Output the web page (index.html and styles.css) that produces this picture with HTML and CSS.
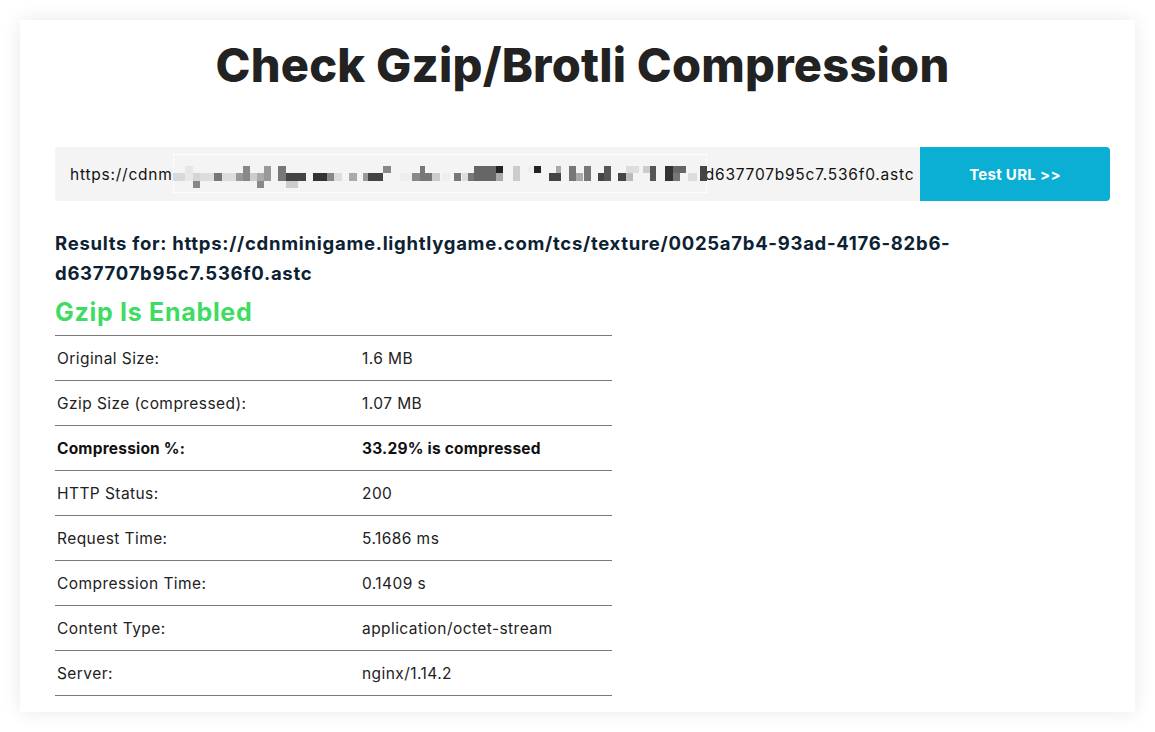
FILE: index.html
```html
<!DOCTYPE html>
<html lang="en">
<head>
<meta charset="utf-8">
<title>Check Gzip/Brotli Compression</title>
<link rel="stylesheet" href="styles.css">
</head>
<body>
<div class="card">
  <h1 class="title">Check Gzip/Brotli Compression</h1>
  <form class="test-form">
    <div class="url-field">
      <span class="url-text">https://cdnminigame.lightlygame.com/tcs/texture/0025a7b4-93ad-4176-82b6-d637707b95c7.536f0.astc</span>
      <svg class="redact" width="534" height="39" viewBox="0 0 534 39" aria-hidden="true">
        <rect x="0" y="0" width="534" height="39" fill="#f4f4f4" stroke="#ffffff" stroke-width="1.5"/>
        <g>
          <rect x="0" y="19" width="12" height="8" fill="#d9d9d9"/>
          <rect x="12" y="19" width="8" height="8" fill="#e8e8e8"/>
          <rect x="12" y="12" width="8" height="7" fill="#e6e6e6"/>
          <rect x="20" y="27" width="7" height="7" fill="#888"/>
          <rect x="20" y="19" width="7" height="8" fill="#d5d5d5"/>
          <rect x="27" y="19" width="14" height="8" fill="#ddd"/>
          <rect x="41" y="19" width="8" height="8" fill="#777"/>
          <rect x="49" y="19" width="14" height="8" fill="#ddd"/>
          <rect x="63" y="19" width="7" height="8" fill="#999"/>
          <rect x="70" y="12" width="7" height="15" fill="#888"/>
          <rect x="77" y="19" width="7" height="8" fill="#ccc"/>
          <rect x="84" y="19" width="7" height="8" fill="#aaa"/>
          <rect x="84" y="27" width="7" height="7" fill="#888"/>
          <rect x="91" y="12" width="7" height="15" fill="#999"/>
          <rect x="105" y="12" width="8" height="15" fill="#777"/>
          <rect x="113" y="19" width="20" height="8" fill="#444"/>
          <rect x="113" y="27" width="12" height="7" fill="#ccc"/>
          <rect x="140" y="19" width="14" height="8" fill="#333"/>
          <rect x="154" y="19" width="7" height="8" fill="#888"/>
          <rect x="161" y="19" width="8" height="8" fill="#ddd"/>
          <rect x="176" y="19" width="8" height="8" fill="#aaa"/>
          <rect x="190" y="19" width="5" height="8" fill="#999"/>
          <rect x="195" y="19" width="15" height="8" fill="#444"/>
          <rect x="210" y="12" width="8" height="7" fill="#888"/>
          <rect x="227" y="19" width="12" height="8" fill="#eee"/>
          <rect x="239" y="19" width="8" height="8" fill="#888"/>
          <rect x="247" y="12" width="5" height="7" fill="#777"/>
          <rect x="247" y="19" width="12" height="8" fill="#777"/>
          <rect x="259" y="19" width="8" height="8" fill="#ccc"/>
          <rect x="269" y="19" width="8" height="8" fill="#eee"/>
          <rect x="281" y="19" width="7" height="8" fill="#777"/>
          <rect x="289" y="19" width="6" height="8" fill="#ddd"/>
          <rect x="295" y="19" width="8" height="8" fill="#777"/>
          <rect x="301" y="12" width="22" height="15" fill="#666"/>
          <rect x="323" y="12" width="7" height="7" fill="#222"/>
          <rect x="323" y="19" width="7" height="8" fill="#aaa"/>
          <rect x="340" y="12" width="7" height="15" fill="#ccc"/>
          <rect x="355" y="12" width="5" height="7" fill="#eee"/>
          <rect x="361" y="12" width="7" height="7" fill="#222"/>
          <rect x="376" y="19" width="12" height="8" fill="#444"/>
          <rect x="383" y="12" width="5" height="7" fill="#aaa"/>
          <rect x="396" y="12" width="7" height="15" fill="#777"/>
          <rect x="403" y="19" width="7" height="8" fill="#aaa"/>
          <rect x="411" y="12" width="7" height="15" fill="#777"/>
          <rect x="425" y="19" width="6" height="8" fill="#444"/>
          <rect x="431" y="12" width="7" height="15" fill="#555"/>
          <rect x="445" y="19" width="8" height="8" fill="#444"/>
          <rect x="453" y="19" width="7" height="8" fill="#bbb"/>
          <rect x="453" y="12" width="13" height="7" fill="#ddd"/>
          <rect x="470" y="12" width="7" height="7" fill="#ccc"/>
          <rect x="477" y="12" width="6" height="15" fill="#555"/>
          <rect x="492" y="12" width="8" height="15" fill="#333"/>
          <rect x="500" y="19" width="7" height="8" fill="#777"/>
          <rect x="500" y="12" width="13" height="7" fill="#666"/>
          <rect x="515" y="19" width="9" height="8" fill="#ddd"/>
          <rect x="527" y="12" width="7" height="15" fill="#444"/>
        </g>
      </svg>
    </div>
    <button type="button" class="test-btn">Test URL &gt;&gt;</button>
  </form>
  <h3 class="results-for">Results for: https://cdnminigame.lightlygame.com/tcs/texture/0025a7b4-93ad-4176-82b6-d637707b95c7.536f0.astc</h3>
  <h2 class="status">Gzip Is Enabled</h2>
  <table class="results">
    <tbody>
      <tr><td>Original Size:</td><td>1.6 MB</td></tr>
      <tr><td>Gzip Size (compressed):</td><td>1.07 MB</td></tr>
      <tr class="strong"><td>Compression %:</td><td>33.29% is compressed</td></tr>
      <tr><td>HTTP Status:</td><td>200</td></tr>
      <tr><td>Request Time:</td><td>5.1686 ms</td></tr>
      <tr><td>Compression Time:</td><td>0.1409 s</td></tr>
      <tr><td>Content Type:</td><td>application/octet-stream</td></tr>
      <tr><td>Server:</td><td>nginx/1.14.2</td></tr>
    </tbody>
  </table>
</div>
</body>
</html>
```

FILE: styles.css
```css
* { box-sizing: border-box; }
html, body { margin: 0; padding: 0; background: #ffffff; }
body {
  font-family: Inter, "Open Sans", "Liberation Sans", sans-serif;
  color: #222;
  padding: 20px;
}
.card {
  background: #fff;
  box-shadow: 0 0 18px rgba(0, 0, 0, 0.09);
  padding: 0 25px 16px 35px;
  height: 692px;
}
.title {
  margin: 0;
  padding-top: 17px;
  height: 127px;
  text-align: center;
  font-size: 47px;
  line-height: 56px;
  font-weight: 800;
  color: #222;
  letter-spacing: 0.2px;
}
.test-form {
  display: flex;
  height: 54px;
  margin: 0;
}
.url-field {
  position: relative;
  flex: 1;
  background: #f4f4f4;
  border-radius: 4px 0 0 4px;
  display: flex;
  align-items: center;
  padding-left: 15px;
  overflow: hidden;
  white-space: nowrap;
}
.url-text {
  font-size: 15.5px;
  color: #111;
  letter-spacing: 0.77px;
}
.redact {
  position: absolute;
  left: 118px;
  top: 7px;
}
.test-btn {
  width: 190px;
  border: 0;
  background: #0bafd4;
  color: #fff;
  font-family: inherit;
  font-size: 15px;
  font-weight: 700;
  border-radius: 0 4px 4px 0;
  letter-spacing: 0.3px;
}
.results-for {
  margin: 27px 0 0;
  font-size: 18.5px;
  line-height: 30px;
  font-weight: 700;
  color: #0c2233;
  letter-spacing: 0.72px;
}
.status {
  margin: 9px 0 0;
  font-size: 25px;
  line-height: 30px;
  font-weight: 700;
  color: #3fdc63;
  letter-spacing: 0.7px;
}
.results {
  margin-top: 8px;
  width: 557px;
  border-collapse: collapse;
  font-size: 15.5px;
  letter-spacing: 0.43px;
}
.results td {
  height: 45px;
  padding: 0 2px;
  border-top: 1px solid #7a7a7a;
  border-bottom: 1px solid #7a7a7a;
  color: #222;
  vertical-align: middle;
}
.results td:first-child { width: 305px; }
.results .strong td { font-weight: 700; color: #111; letter-spacing: 0.2px; }
```
